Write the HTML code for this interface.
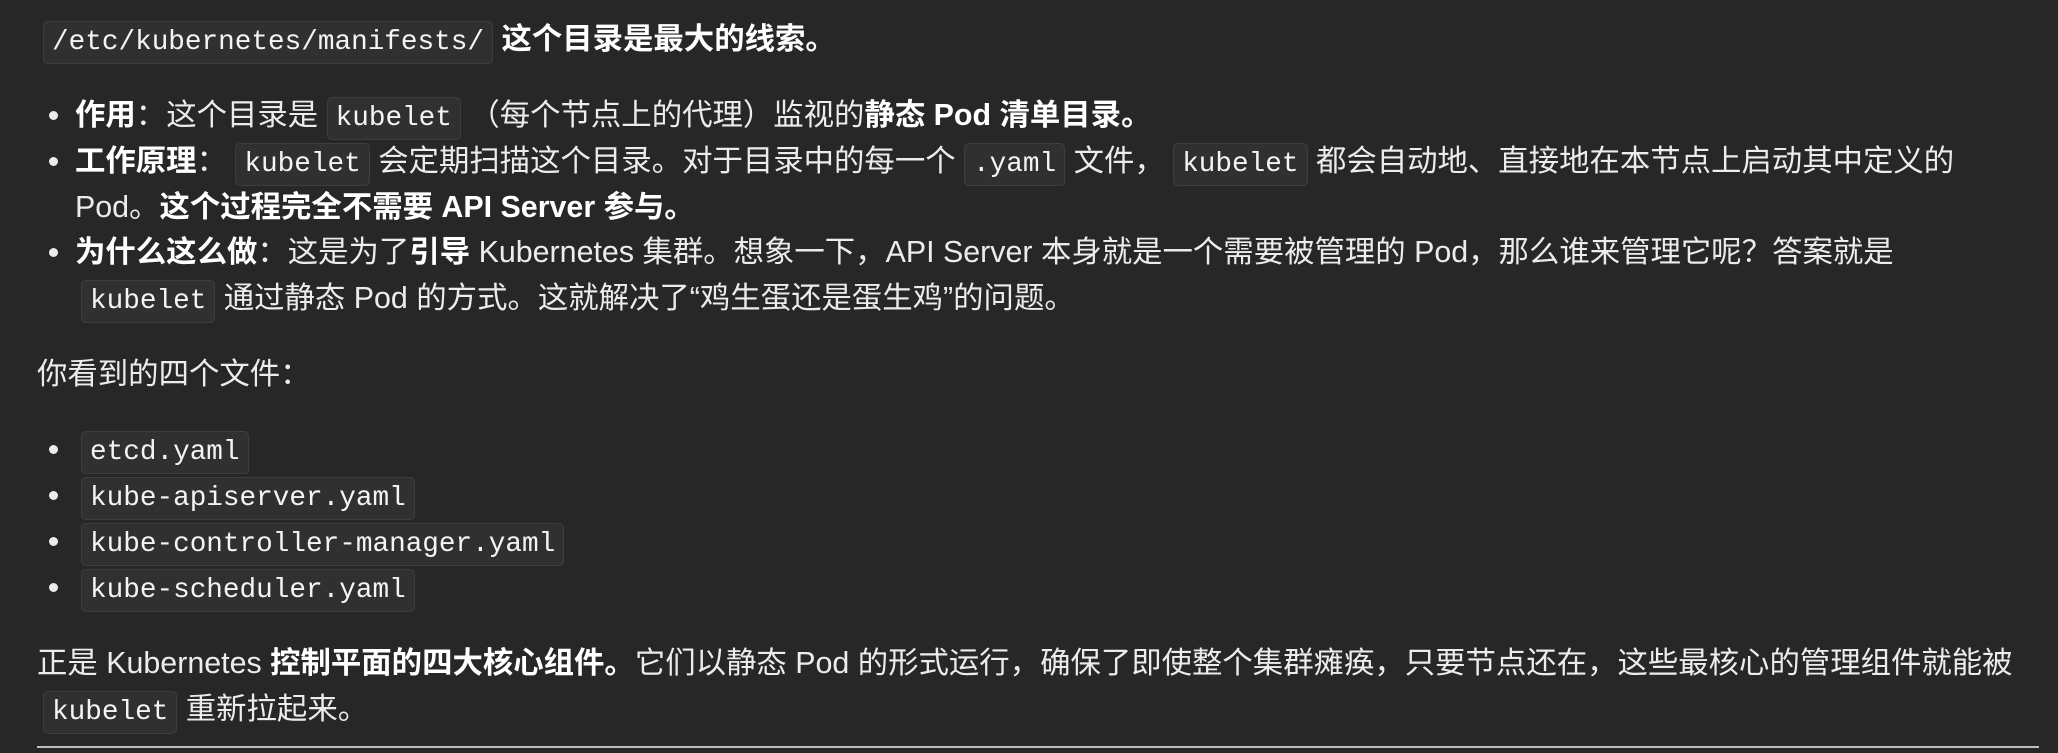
<!DOCTYPE html>
<html><head><meta charset="utf-8"><style>
html,body{margin:0;padding:0;background:#272727;width:2058px;height:753px;overflow:hidden}
body{position:relative;color:#ececec;font-family:"Liberation Sans","Noto Sans CJK SC",sans-serif;font-size:30.4px}
.l{position:absolute;left:37px;height:46px;line-height:46px;white-space:nowrap}
b{color:#fff;font-weight:bold}
code{font-family:"Liberation Mono","DejaVu Sans Mono",monospace;font-size:27.7px;background:#303030;border:1px solid #3e3e3e;border-radius:5px;padding:5px 8px;color:#f4f4f4}
.li{left:75px}
.dot{position:absolute;left:49px;width:9px;height:9px;border-radius:50%;background:#ececec}
hr{position:absolute;left:37px;top:746px;width:2002px;margin:0;border:0;border-top:2px solid #bdbdbd}
</style></head><body>
<div class="l" style="top:16px;left:43px"><code>/etc/kubernetes/manifests/</code> <b>这个目录是最大的线索。</b></div>

<div class="dot" style="top:111px"></div>
<div class="l li" style="top:92px"><b>作用</b>：这个目录是 <code>kubelet</code> （每个节点上的代理）监视的<b>静态 Pod 清单目录。</b></div>
<div class="dot" style="top:157px"></div>
<div class="l li" style="top:138px"><b>工作原理</b>： <code>kubelet</code> 会定期扫描这个目录。对于目录中的每一个 <code>.yaml</code> 文件， <code>kubelet</code> 都会自动地、直接地在本节点上启动其中定义的</div>
<div class="l li" style="top:184px">Pod。<b>这个过程完全不需要 API Server 参与。</b></div>
<div class="dot" style="top:248px"></div>
<div class="l li" style="top:229px"><b>为什么这么做</b>：这是为了<b>引导</b> Kubernetes 集群。想象一下，API Server 本身就是一个需要被管理的 Pod，那么谁来管理它呢？答案就是</div>
<div class="l li" style="top:275px;left:81px"><code>kubelet</code> 通过静态 Pod 的方式。这就解决了“鸡生蛋还是蛋生鸡”的问题。</div>

<div class="l" style="top:351px">你看到的四个文件：</div>

<div class="dot" style="top:445px"></div>
<div class="l li" style="top:426px;left:81px"><code>etcd.yaml</code></div>
<div class="dot" style="top:491px"></div>
<div class="l li" style="top:472px;left:81px"><code>kube-apiserver.yaml</code></div>
<div class="dot" style="top:537px"></div>
<div class="l li" style="top:518px;left:81px"><code>kube-controller-manager.yaml</code></div>
<div class="dot" style="top:583px"></div>
<div class="l li" style="top:564px;left:81px"><code>kube-scheduler.yaml</code></div>

<div class="l" style="top:640px">正是 Kubernetes <b>控制平面的四大核心组件。</b>它们以静态 Pod 的形式运行，确保了即使整个集群瘫痪，只要节点还在，这些最核心的管理组件就能被</div>
<div class="l" style="top:686px;left:43px"><code>kubelet</code> 重新拉起来。</div>
<hr>
</body></html>
